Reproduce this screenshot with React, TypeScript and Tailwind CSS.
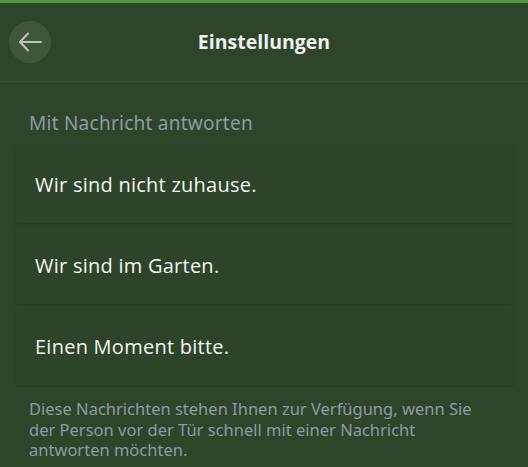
const replies = ["Wir sind nicht zuhause.", "Wir sind im Garten.", "Einen Moment bitte."];

function BackArrow() {
  return (
    <svg width="42" height="42" viewBox="0 0 42 42" fill="none" stroke="#bcc4bb" strokeWidth="2" strokeLinecap="round" strokeLinejoin="round">
      <path d="M32 21H11" />
      <path d="M19 12.5L11 21L19 29.5" />
    </svg>
  );
}

export default function App() {
  return (
    <div className="w-[528px] h-[467px] overflow-hidden bg-[#2e4529] font-['Open_Sans',sans-serif]">
      <div className="h-[3px] bg-[#4d9a3c]" />

      {/* Header */}
      <div className="relative flex h-[79px] items-center justify-center border-b border-[#3a5235]">
        <button className="absolute left-[9px] top-[18px] flex h-[42px] w-[42px] items-center justify-center rounded-full bg-[#3f5639]">
          <BackArrow />
        </button>
        <h1 className="text-[19.5px] font-bold text-[#eef0ee]">Einstellungen</h1>
      </div>

      <div className="pt-[29px]">
        <div className="px-[29px] text-[19px] leading-[24px] tracking-[0.25px] text-[#8c9ba8] font-['Noto_Sans',sans-serif]">
          Mit Nachricht antworten
        </div>

        <div className="mt-[12px] flex flex-col gap-[5px] pl-4 pr-[15px]">
          {replies.map((r) => (
            <div
              key={r}
              className="flex h-[76px] items-center rounded-[3px] bg-[#2d4428] px-[19px] shadow-[0_1px_3px_rgba(0,0,0,0.18)]"
            >
              <span className="text-[20px] font-medium tracking-[0.25px] text-[#f4f5f4]">{r}</span>
            </div>
          ))}
        </div>

        <p className="mt-[14px] pl-[29px] pr-[30px] text-[16.5px] leading-[20.5px] text-[#8c9ba8] font-['Noto_Sans',sans-serif]">
          Diese Nachrichten stehen Ihnen zur Verfügung, wenn Sie der Person vor der Tür schnell mit einer Nachricht antworten möchten.
        </p>
      </div>
    </div>
  );
}
